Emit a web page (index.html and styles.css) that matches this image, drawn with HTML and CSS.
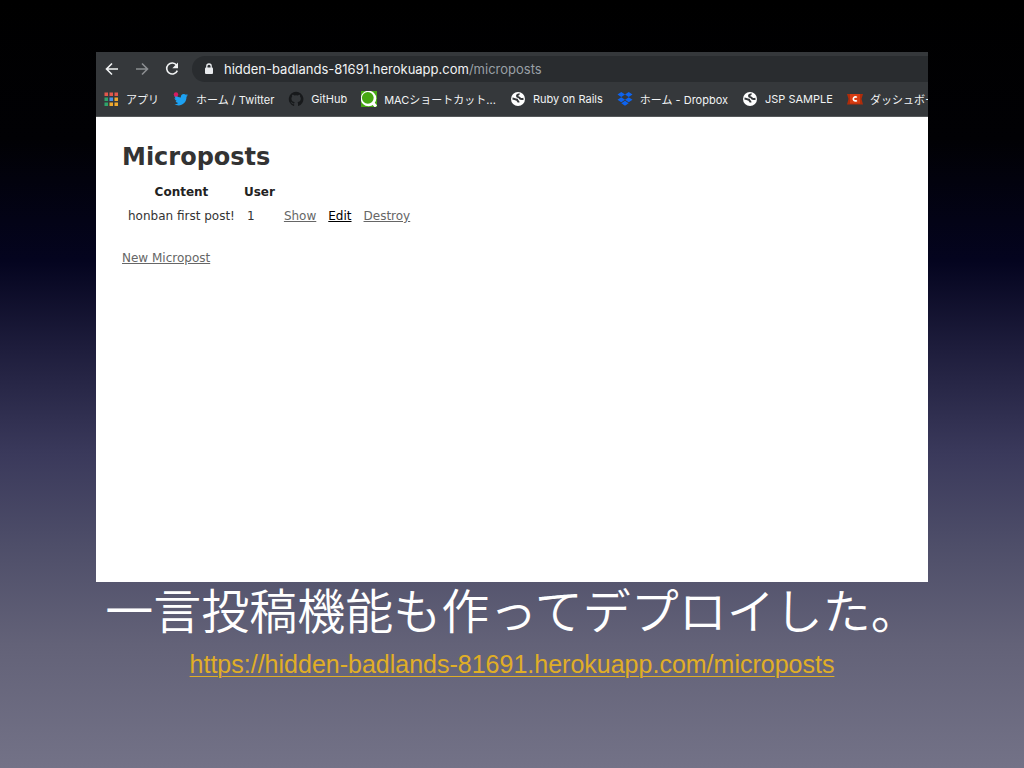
FILE: index.html
```html
<!DOCTYPE html>
<html lang="ja">
  <head>
    <meta charset="UTF-8" />
    <meta name="viewport" content="width=device-width, initial-scale=1.0" />
    <title>Microposts</title>
    <link rel="stylesheet" href="styles.css">
  </head>
  <body>
    <main class="slide">
      <div class="browser">
        <div class="toolbar">
          <button type="button" class="nav-button" aria-label="Back">
            <svg viewBox="0 0 16 16"><path d="M14 8H2.500M8 2.500 2.500 8 8 13.500" /></svg>
          </button>
          <button type="button" class="nav-button forward" aria-label="Forward">
            <svg viewBox="0 0 16 16"><path d="M2 8h11.500M8 2.500 13.500 8 8 13.500" /></svg>
          </button>
          <button type="button" class="nav-button" aria-label="Reload">
            <svg viewBox="0 0 16 16"><path d="M12.600 4.200A5.500 5.500 0 1 0 13.300 9.600" /><path class="solid" d="M14 1.500v5.700H8.300z" /></svg>
          </button>
          <div class="address">
            <svg class="lock" viewBox="0 0 10 12"><path d="M2.800 5V3.200a2.200 2.200 0 0 1 4.400 0V5" fill="none" stroke="#e8eaed" stroke-width="1.300" /><rect x="1" y="4.500" width="8" height="6.500" rx="1" fill="#e8eaed" /></svg>
            <span class="url">hidden-badlands-81691.herokuapp.com<span class="path">/microposts</span></span>
          </div>
        </div>

        <nav class="bookmarks">
          <a href="#">
            <svg viewBox="0 0 16 16">
              <path fill="#e2574c" d="M1.500 1.500h3.500V5H1.500zM6.500 1.500H10V5H6.500zM11.500 1.500H15V5h-3.500z" />
              <path fill="#2fa36b" d="M1.500 6.500h3.500V10H1.500zM1.500 11.500h3.500V15H1.500z" />
              <path fill="#4a90e8" d="M6.500 6.500H10V10H6.500z" />
              <path fill="#f0a92e" d="M11.500 6.500H15V10h-3.500zM6.500 11.500H10V15H6.500zM11.500 11.500H15V15h-3.500z" />
            </svg>
            アプリ
          </a>
          <a href="#">
            <svg viewBox="0 0 16 16">
              <path fill="#1da1f2" d="M15 4.200c-.5.300-1 .4-1.600.5.500-.4 1-.9 1.200-1.600-.6.300-1.100.5-1.800.7A2.900 2.900 0 0 0 7.900 6.400 8 8 0 0 1 2 3.500c-.8 1.400-.4 3 .9 3.900-.5 0-.9-.2-1.300-.4 0 1.400 1 2.600 2.300 2.900-.4.100-.8.100-1.300 0 .4 1.200 1.400 2 2.700 2A5.800 5.800 0 0 1 1 13.100c5.900 3.500 12.700-.3 12.500-7.400.6-.4 1.100-.9 1.500-1.500z" />
              <circle cx="3" cy="3.500" r="2.200" fill="#d81b60" />
            </svg>
            ホーム / Twitter
          </a>
          <a href="#">
            <svg viewBox="0 0 16 16"><path fill="#17191b" d="M8 .8a7.300 7.300 0 0 0-2.300 14.200c.4.100.5-.2.500-.4v-1.400c-2 .4-2.500-.9-2.500-.9-.3-.8-.8-1-.8-1-.7-.5.100-.5.100-.5.700.1 1.100.8 1.100.8.700 1.100 1.700.8 2.200.6 0-.5.200-.8.400-1-1.600-.2-3.300-.8-3.300-3.600 0-.8.300-1.500.8-2-.1-.2-.4-.9.100-1.900 0 0 .6-.2 2 .7a7 7 0 0 1 3.600 0c1.400-.9 2-.7 2-.7.400 1 .1 1.700.1 1.900.5.500.8 1.200.8 2 0 2.800-1.700 3.400-3.300 3.600.3.200.5.700.5 1.400v2c0 .2.100.5.500.4A7.300 7.300 0 0 0 8 .8z" /></svg>
            GitHub
          </a>
          <a href="#">
            <svg viewBox="0 0 16 16">
              <path fill="#46a813" d="M0 0h16v16H0z" />
              <circle cx="7.500" cy="7.500" r="7.800" fill="#fff" />
              <path d="m11 11 4 4.500" stroke="#fff" stroke-width="3" />
              <circle cx="6.800" cy="6.800" r="5.900" fill="#46a813" />
            </svg>
            MACショートカット...
          </a>
          <a href="#">
            <svg viewBox="0 0 16 16"><circle cx="8" cy="8" r="7" fill="#fff" /><path class="land" d="M2.500 7.500c2 .2 2.500 1 4.500 1.200.2 1.600 1.600 1.300 1.500 2.800M9 2.500c-.2 1.800-2 .8-2 2.500 0 1.500 2.500.8 3 2.500.8.800 2 .6 3.500.3" /></svg>
            Ruby on Rails
          </a>
          <a href="#">
            <svg viewBox="0 0 16 16"><path fill="#0d63f0" d="M4.300 1 8 3.500 4.300 6 .5 3.500zM11.700 1l3.800 2.500L11.700 6 8 3.500zM4.300 6.200 8 8.700l-3.700 2.500L.5 8.700zM11.700 6.200l3.800 2.500-3.800 2.500L8 8.700zM8 9.700l3.700 2.500L8 14.700l-3.700-2.500z" /></svg>
            ホーム - Dropbox
          </a>
          <a href="#">
            <svg viewBox="0 0 16 16"><circle cx="8" cy="8" r="7" fill="#fff" /><path class="land" d="M2.500 7.500c2 .2 2.500 1 4.500 1.200.2 1.600 1.600 1.300 1.500 2.800M9 2.500c-.2 1.800-2 .8-2 2.500 0 1.500 2.500.8 3 2.500.8.800 2 .6 3.500.3" /></svg>
            JSP SAMPLE
          </a>
          <a href="#">
            <svg viewBox="0 0 16 16"><path fill="#b02c0a" d="M0 3h16l-1.500 5 1.500 5.500H0L1.500 8z" /><path fill="#d63c12" d="M3 3h10v9.500H3z" /><path d="M9.800 6.500A2 2 0 1 0 9.800 9.300" fill="none" stroke="#fff" stroke-width="1.700" /></svg>
            ダッシュボード
          </a>
        </nav>

        <div class="page">
          <h1>Microposts</h1>
          <table>
            <thead>
              <tr>
                <th>Content</th>
                <th>User</th>
                <th colspan="3"></th>
              </tr>
            </thead>
            <tbody>
              <tr>
                <td>honban first post!</td>
                <td>1</td>
                <td><a href="#">Show</a></td>
                <td><a href="#" class="active">Edit</a></td>
                <td><a href="#">Destroy</a></td>
              </tr>
            </tbody>
          </table>
          <a href="#" class="new-link">New Micropost</a>
        </div>
      </div>

      <h2>一言投稿機能も作ってデプロイした。</h2>
      <a class="slide-link" href="https://hidden-badlands-81691.herokuapp.com/microposts">https://hidden-badlands-81691.herokuapp.com/microposts</a>
    </main>
  </body>
</html>
```
FILE: styles.css
```css
* {
  box-sizing: border-box;
}
body {
  margin: 0;
  font-family: Inter, "Noto Sans CJK JP", sans-serif;
}
.slide {
  display: flex;
  flex-direction: column;
  align-items: center;
  min-height: 100vh;
  padding: 52px 96px 0;
  background: linear-gradient(#000 0%, #010104 18%, #04041f 34%, #1d1c3b 45%, #3a395b 59%, #4e4e69 71%, #636278 84%, #737287 100%);
}

/* browser window */
.browser {
  width: 100%;
  overflow: hidden;
  background: #fff;
}
.toolbar {
  display: flex;
  align-items: center;
  height: 34px;
  padding: 4px 0 4px 8px;
  background: #35383b;
}
.nav-button {
  width: 16px;
  height: 16px;
  margin-right: 14px;
  padding: 0;
  border: 0;
  background: none;
}
.nav-button svg {
  display: block;
  width: 16px;
  height: 16px;
  fill: none;
  stroke: #f1f3f4;
  stroke-width: 1.6;
}
.nav-button .solid {
  fill: #f1f3f4;
  stroke: none;
}
.forward svg {
  stroke: #8b8e91;
}
.address {
  display: flex;
  flex: 1;
  align-items: center;
  gap: 10px;
  height: 26px;
  margin-left: -2px;
  padding-left: 12px;
  border-radius: 13px 0 0 13px;
  background: #292c2f;
}
.lock {
  width: 10px;
  height: 12px;
}
.url {
  color: #f1f3f4;
  font-size: 13px;
}
.path {
  color: #9aa0a6;
}
.bookmarks {
  display: flex;
  gap: 14px;
  height: 31px;
  padding: 0 0 4px 7px;
  border-bottom: 1px solid #55585a;
  background: #35383b;
}
.bookmarks a {
  display: flex;
  flex: none;
  align-items: center;
  gap: 7px;
  color: #f1f3f4;
  font-size: 11px;
  text-decoration: none;
  white-space: nowrap;
}
.bookmarks svg {
  width: 16px;
  height: 16px;
}
.land {
  fill: none;
  stroke: #35383b;
  stroke-width: 2;
}

/* microposts page */
.page {
  min-height: 465px;
  padding: 24px 26px;
  color: #333;
  font-family: "DejaVu Sans", sans-serif;
  font-size: 12px;
  line-height: 18px;
}
h1 {
  margin: 0 0 8px;
  font-size: 24px;
  line-height: 32px;
}
table {
  margin-bottom: 18px;
  border-spacing: 0 2px;
}
th {
  padding: 0 3px;
  color: #222;
}
td {
  padding: 4px 6px;
}
.page a {
  color: #666;
}
.page .active {
  color: #000;
}

/* caption under the window */
h2 {
  margin: 0 0 14px;
  color: #fff;
  font-family: "Noto Sans CJK JP", sans-serif;
  font-size: 48px;
  font-weight: 350;
  line-height: 52px;
  white-space: nowrap;
}
.slide-link {
  color: #e0ae26;
  font-family: "Liberation Sans", sans-serif;
  font-size: 25px;
  line-height: 32px;
  text-decoration-thickness: 1px;
  text-underline-offset: 3px;
}
```
